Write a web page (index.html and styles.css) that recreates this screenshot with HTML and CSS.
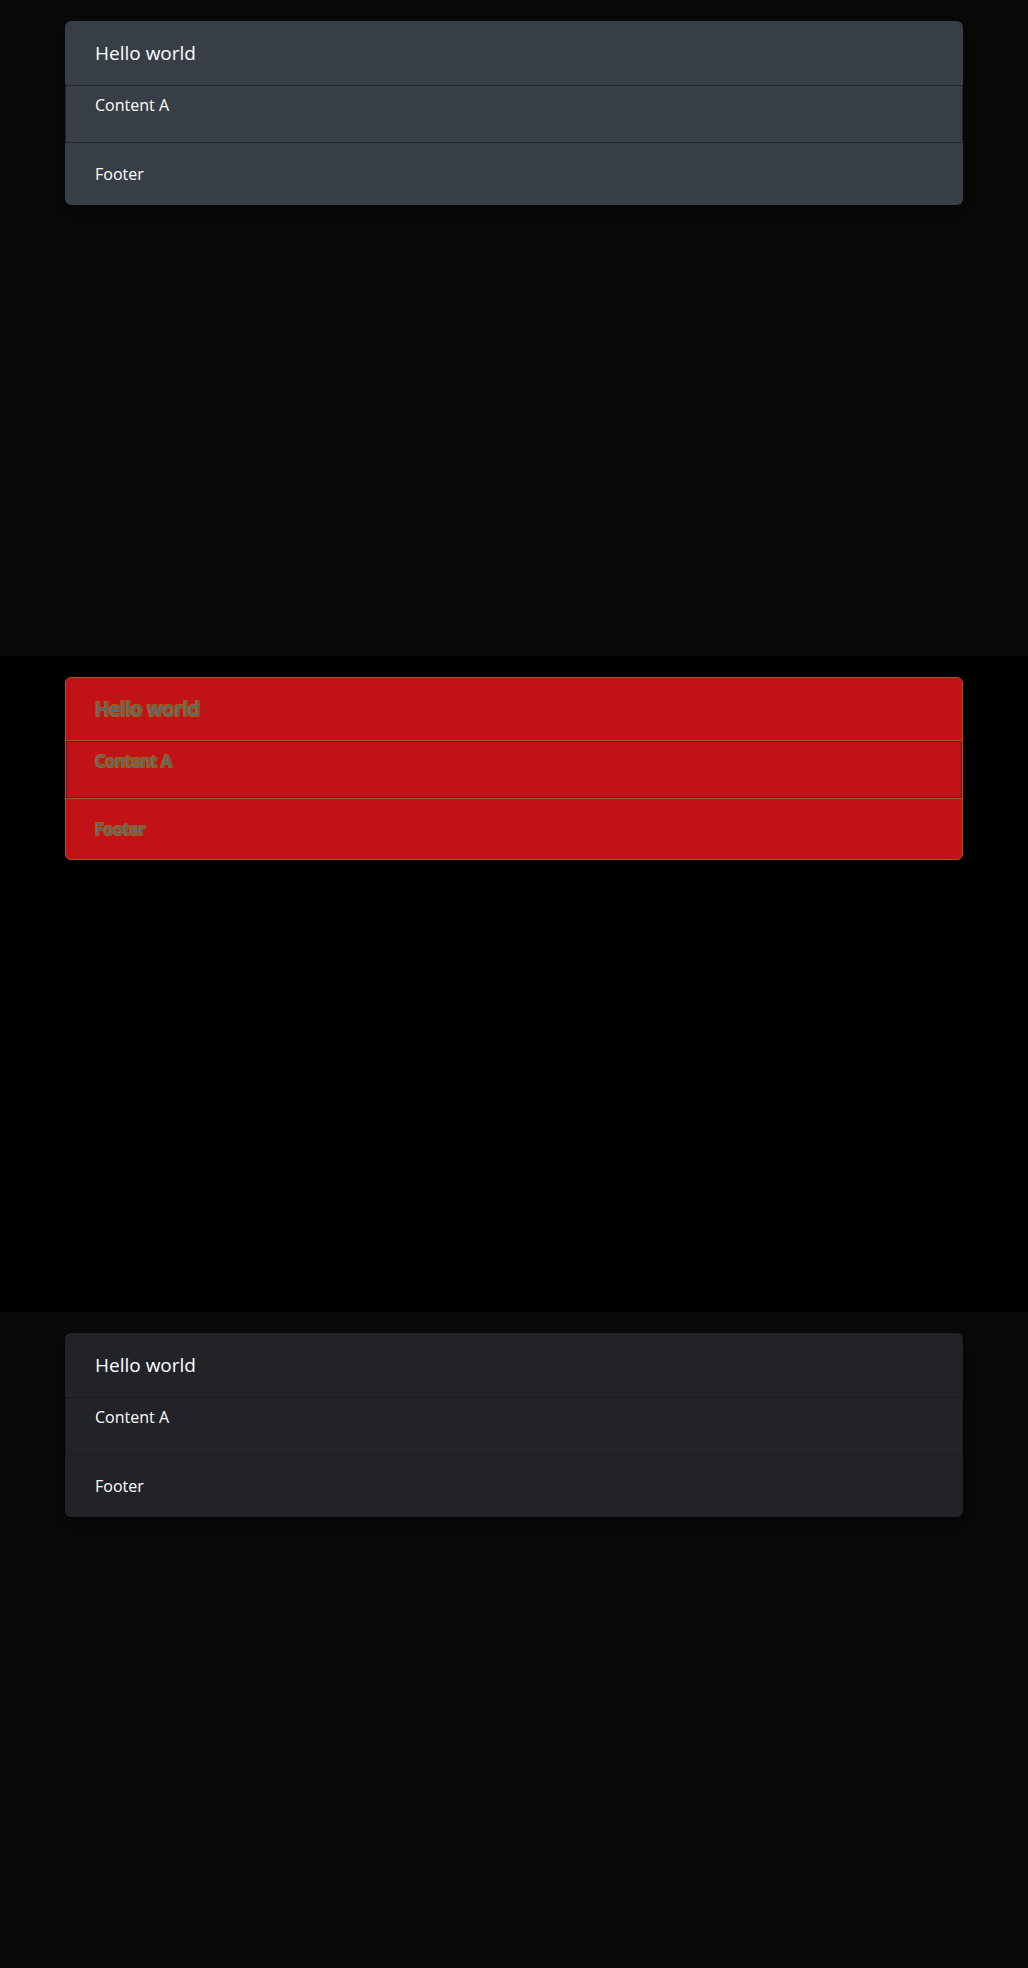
FILE: index.html
```html
<!DOCTYPE html>
<html>
<head>
<meta charset="utf-8">
<link rel="stylesheet" href="styles.css">
</head>
<body>
<section class="panel panel-slate">
  <div class="card">
    <div class="card-header">Hello world</div>
    <div class="card-body">Content A</div>
    <div class="card-footer">Footer</div>
  </div>
</section>
<section class="panel panel-debug">
  <div class="card">
    <div class="card-header">Hello world</div>
    <div class="card-body">Content A</div>
    <div class="card-footer">Footer</div>
  </div>
</section>
<section class="panel panel-dark">
  <div class="card">
    <div class="card-header">Hello world</div>
    <div class="card-body">Content A</div>
    <div class="card-footer">Footer</div>
  </div>
</section>
</body>
</html>
```
FILE: styles.css
```css
html, body {
  margin: 0;
  padding: 0;
}
body {
  font-family: "Open Sans", "Noto Sans", sans-serif;
  color: #ffffff;
  background: #0a0a0a;
}
.panel {
  height: 656px;
  box-sizing: border-box;
  padding: 21px 65px 0;
  background: #0a0a0a;
}
.card {
  border-radius: 6px;
  overflow: hidden;
  box-shadow: 0 0 0 1px rgba(0,0,0,0.35), 0 8px 30px rgba(0,0,0,0.6);
}
.card-header {
  padding: 20px 30px;
  font-size: 19px;
  line-height: 24px;
  font-weight: 500;
}
.card-body {
  padding: 7px 29px 25px;
  font-size: 16px;
  line-height: 24px;
  font-weight: 500;
  border: 1px dotted #111418;
}
.card-footer {
  padding: 19px 30px 19px;
  font-size: 16px;
  line-height: 24px;
  font-weight: 500;
}
.panel-slate .card { background: #373e46; }
.panel-dark .card { background: #222327; }

.panel-debug { background: #000000; }
.panel-debug .card {
  background: #c11217;
  border: 1px solid #a35c12;
  box-shadow: none;
  overflow: visible;
}
.panel-debug .card-header {
  padding: 19px 29px 19px;
  border-bottom: 1px solid #a35c12;
}
.panel-debug .card-body {
  padding: 7px 28px 24px;
  border: 1px dotted #2a1a08;
  outline: 1px solid #a35c12;
  outline-offset: 0;
}
.panel-debug .card-footer {
  padding: 18px 29px 18px;
  border-top: 1px solid #a35c12;
}
.panel-debug .card-header,
.panel-debug .card-body,
.panel-debug .card-footer {
  color: #5b6572;
  font-weight: 600;
  text-shadow: 1px 0 0 #a35c12, -1px 0 0 #a35c12, 0 1px 0 #a35c12, 0 -1px 0 #a35c12,
    1px 1px 0 #a35c12, -1px -1px 0 #a35c12, 1px -1px 0 #a35c12, -1px 1px 0 #a35c12;
}
```
